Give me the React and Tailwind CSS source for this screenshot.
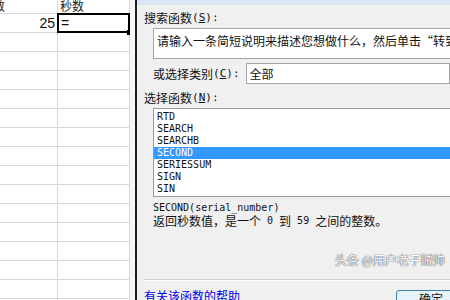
import React from 'react'

const cjk = "font-['SimSun','Noto_Sans_CJK_SC',sans-serif]"
const mono = "font-['DejaVu_Sans_Mono','Noto_Sans_CJK_SC',monospace]"

const functions = ['RTD', 'SEARCH', 'SEARCHB', 'SECOND', 'SERIESSUM', 'SIGN', 'SIN']

const Sheet = () => {
  const rows = Array.from({ length: 15 })
  return (
    <div className="w-[130px] shrink-0 overflow-hidden bg-white">
      <div className="-ml-[40px] grid w-[170px] grid-cols-[98px_72px]">
        {/* header row */}
        <div className={`h-[14px] overflow-hidden border-r border-b border-[#d5d8de] pl-[21px] text-[12px] leading-[12px] text-[#222] ${cjk}`}>分数</div>
        <div className={`h-[14px] overflow-hidden border-r border-b border-[#d5d8de] pl-[2px] text-[12px] leading-[12px] text-[#222] ${cjk}`}>秒数</div>

        {/* first data row */}
        <div className="flex h-[19px] items-center justify-end border-r border-b border-[#d5d8de] pr-[2px] font-['Liberation_Sans',sans-serif] text-[14px] text-[#111]">25</div>
        <div className="relative h-[19px] border-r border-b border-[#d5d8de]">
          <div className="absolute -top-[1px] -left-[1px] -right-[1px] -bottom-[1px] flex items-center border-2 border-black pl-[2px] font-['Liberation_Sans',sans-serif] text-[14px] text-[#111]">=</div>
          <div className="absolute -right-[3px] -bottom-[3px] h-[5px] w-[5px] bg-black" />
        </div>

        {rows.map((_, i) => (
          <React.Fragment key={i}>
            <div className="h-[19px] border-r border-b border-[#d5d8de]" />
            <div className="h-[19px] border-r border-b border-[#d5d8de]" />
          </React.Fragment>
        ))}
      </div>
    </div>
  )
}

const Label = ({ text, hot, className = '' }) => (
  <div className={`flex h-[12px] items-center whitespace-nowrap text-[12px] leading-[12px] text-[#111] ${cjk} ${className}`}>
    {text}
    <span className={`${mono} text-[11px] leading-[12px]`}>(<span className="underline">{hot}</span>):</span>
  </div>
)

const Dialog = () => (
  <div className="relative flex min-w-0 flex-1 flex-col overflow-hidden bg-[#f0f0f0]">
    <div className="h-[5px] shrink-0 bg-[#dbe5f3]" />

    <div className="flex flex-col pl-[7px]">
      <Label text="搜索函数" hot="S" className="mt-[7px]" />

      <div className={`mt-[4px] ml-[9px] h-[31px] w-[320px] shrink-0 overflow-hidden whitespace-nowrap border border-[#a5a5a5] bg-white pt-[5px] pl-[3px] text-[12px] leading-[14px] text-[#111] ${cjk}`}>
        请输入一条简短说明来描述您想做什么，然后单击“转到”
      </div>

      <div className="mt-[4px] ml-[9px] flex items-center gap-[6px]">
        <Label text="或选择类别" hot="C" />
        <div className={`flex h-[21px] w-[230px] items-center border border-[#a5a5a5] bg-white pl-[3px] text-[12px] text-[#111] ${cjk}`}>全部</div>
      </div>

      <Label text="选择函数" hot="N" className="mt-[8px]" />

      <div className="mt-[4px] ml-[9px] flex h-[89px] w-[320px] shrink-0 flex-col border border-[#9a9a9a] bg-white pt-[2px]">
        {functions.map((f) => (
          <div
            key={f}
            className={`h-[12px] pl-[3px] text-[10px] leading-[12px] ${mono} ${
              f === 'SECOND' ? 'bg-[#3399ff] text-white' : 'text-[#111]'
            }`}
          >
            {f}
          </div>
        ))}
      </div>

      <div className={`mt-[4px] ml-[9px] h-[13px] text-[10px] leading-[13px] text-[#111] ${mono}`}>SECOND(serial_number)</div>
      <div className={`ml-[9px] flex h-[14px] items-center whitespace-pre text-[12px] leading-[14px] text-[#111] ${cjk}`}>
        返回秒数值，是一个<span className={`${mono} text-[10px]`}> 0 </span>到<span className={`${mono} text-[10px]`}> 59 </span>之间的整数。
      </div>

      <div className="mt-[51px] h-[2px] border-t border-b border-t-[#d0d0d0] border-b-white" />

      <div className="mt-[9px] flex items-start justify-between">
        <span className={`text-[12px] leading-[12px] text-[#0000ee] underline ${cjk}`}>有关该函数的帮助</span>
        <div className={`-mr-[6px] h-[20px] w-[60px] rounded-[3px] border border-[#3c7fb1] bg-[#e8f2fa] pt-[2px] pl-[22px] text-[12px] leading-[12px] text-[#111] ${cjk}`}>确定</div>
      </div>
    </div>

    <div className={`absolute top-[253px] left-[198px] whitespace-nowrap text-[12px] leading-[14px] text-white [text-shadow:0_0_1px_#444,0_0_1px_#444] ${cjk}`}>
      头条 @用户老子贼帅
    </div>
  </div>
)

export default function App() {
  return (
    <div className="flex h-[300px] w-[450px] overflow-hidden bg-white">
      <Sheet />
      <div className="w-[5px] shrink-0 bg-[#f6f6f6]" />
      <div className="w-[2px] shrink-0 bg-[#1e1e1e]" />
      <Dialog />
    </div>
  )
}
